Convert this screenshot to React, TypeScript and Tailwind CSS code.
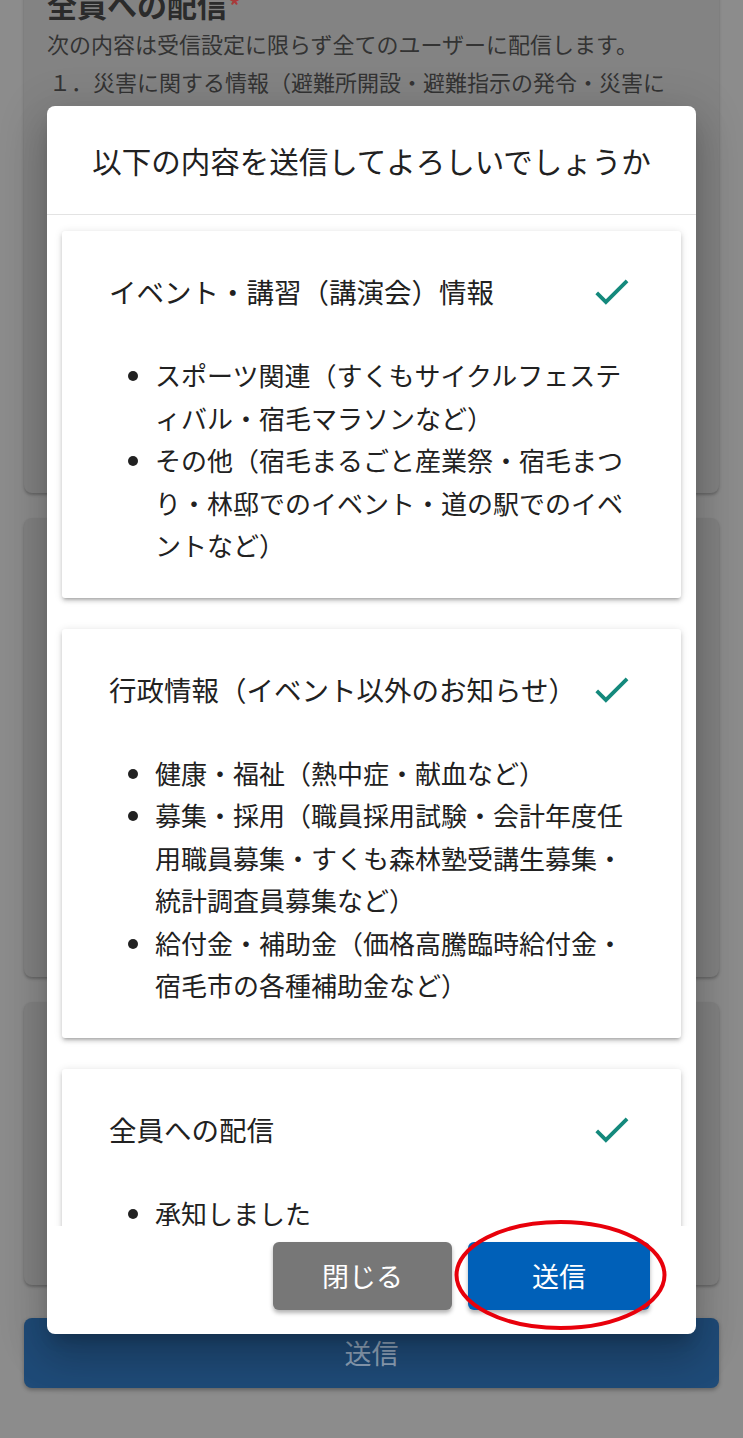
import React from "react";

const font = { fontFamily: '"Noto Sans CJK JP", "Noto Sans", sans-serif' };

function Check() {
  return (
    <svg viewBox="0 0 24 24" className="w-[45px] h-[45px] shrink-0 fill-[#14897c]">
      <path d="M9 16.17 4.83 12l-1.42 1.41L9 19 21 7l-1.41-1.41z" />
    </svg>
  );
}

function ItemCard({ title, items }: { title: string; items: string[][] }) {
  return (
    <div className="bg-white rounded-[3px] shadow-[0_3px_3px_-2px_rgba(0,0,0,0.2),0_3px_4px_0_rgba(0,0,0,0.14),0_1px_8px_0_rgba(0,0,0,0.12)] pt-[38px] pb-[31px] px-[47px]">
      <div className="flex items-center justify-between h-[45px]">
        <span className="text-[27.5px] leading-[45px] text-[#212121]">{title}</span>
        <Check />
      </div>
      <ul className="list-disc pl-[46px] mt-[40px] text-[26px] leading-[42.5px] text-[#212121]">
        {items.map((lines, i) => (
          <li key={i}>
            {lines.map((l, j) => (
              <React.Fragment key={j}>
                {j > 0 && <br />}
                {l}
              </React.Fragment>
            ))}
          </li>
        ))}
      </ul>
    </div>
  );
}

export default function App() {
  return (
    <div className="relative w-[743px] h-[1438px] overflow-hidden bg-[#8c8c8c]" style={font}>
      {/* page behind the dialog */}
      <div className="flex flex-col gap-[25px] px-[24px]">
        <div className="-mt-[40px] h-[533px] rounded-[8px] bg-[#838383] shadow-[0_2px_3px_rgba(0,0,0,0.25)] pt-[24px] pl-[23px]">
          <div className="text-[30px] leading-[40px] font-bold text-[#2b2b2b]">
            全員への配信<span className="text-[#a83a3a] text-[22px] align-top ml-[2px]">*</span>
          </div>
          <p className="text-[22px] leading-[38px] text-[#333]">次の内容は受信設定に限らず全てのユーザーに配信します。</p>
          <p className="text-[22px] leading-[38px] text-[#333] pl-[2px] whitespace-nowrap">１．災害に関する情報（避難所開設・避難指示の発令・災害に</p>
        </div>
        <div className="h-[459px] rounded-[8px] bg-[#838383] shadow-[0_2px_3px_rgba(0,0,0,0.25)]" />
        <div className="h-[283px] rounded-[8px] bg-[#838383] shadow-[0_2px_3px_rgba(0,0,0,0.25)]" />
        <div className="mt-[8px] h-[70px] rounded-[8px] bg-[#1f4b78] shadow-[0_2px_4px_rgba(0,0,0,0.3)] flex items-center justify-center text-[27px] text-[#8ea2b8]">
          送信
        </div>
      </div>

      {/* dialog */}
      <div className="absolute left-[47px] top-[106px] w-[649px] h-[1228px] bg-white rounded-[8px] shadow-[0_11px_15px_-7px_rgba(0,0,0,0.2),0_24px_38px_3px_rgba(0,0,0,0.14),0_9px_46px_8px_rgba(0,0,0,0.12)] flex flex-col overflow-hidden">
        <div className="h-[109px] shrink-0 border-b border-[#e3e3e3] flex items-center justify-center text-[29.5px] text-[#212121]">
          以下の内容を送信してよろしいでしょうか
        </div>
        <div className="flex-1 overflow-hidden px-[15px] pt-[16px] flex flex-col gap-[31px]">
          <ItemCard
            title="イベント・講習（講演会）情報"
            items={[
              ["スポーツ関連（すくもサイクルフェステ", "ィバル・宿毛マラソンなど）"],
              ["その他（宿毛まるごと産業祭・宿毛まつ", "り・林邸でのイベント・道の駅でのイベ", "ントなど）"],
            ]}
          />
          <ItemCard
            title="行政情報（イベント以外のお知らせ）"
            items={[
              ["健康・福祉（熱中症・献血など）"],
              ["募集・採用（職員採用試験・会計年度任", "用職員募集・すくも森林塾受講生募集・", "統計調査員募集など）"],
              ["給付金・補助金（価格高騰臨時給付金・", "宿毛市の各種補助金など）"],
            ]}
          />
          <ItemCard title="全員への配信" items={[["承知しました"]]} />
        </div>
        <div className="h-[108px] shrink-0 flex justify-end items-start gap-[16px] pt-[16px] pr-[46px]">
          <button className="w-[179px] h-[68px] rounded-[6px] bg-[#777777] text-white text-[27px] shadow-[0_3px_4px_rgba(0,0,0,0.3)]">
            閉じる
          </button>
          <button className="w-[182px] h-[68px] rounded-[6px] bg-[#0060b8] text-white text-[27px] shadow-[0_3px_4px_rgba(0,0,0,0.3)]">
            送信
          </button>
        </div>
      </div>

      {/* red annotation circle */}
      <svg className="absolute left-[453px] top-[1218px] w-[215px] h-[114px] pointer-events-none" viewBox="0 0 215 114">
        <ellipse cx="107.5" cy="57" rx="104" ry="53" fill="none" stroke="#e8000b" strokeWidth="4" />
      </svg>
    </div>
  );
}
